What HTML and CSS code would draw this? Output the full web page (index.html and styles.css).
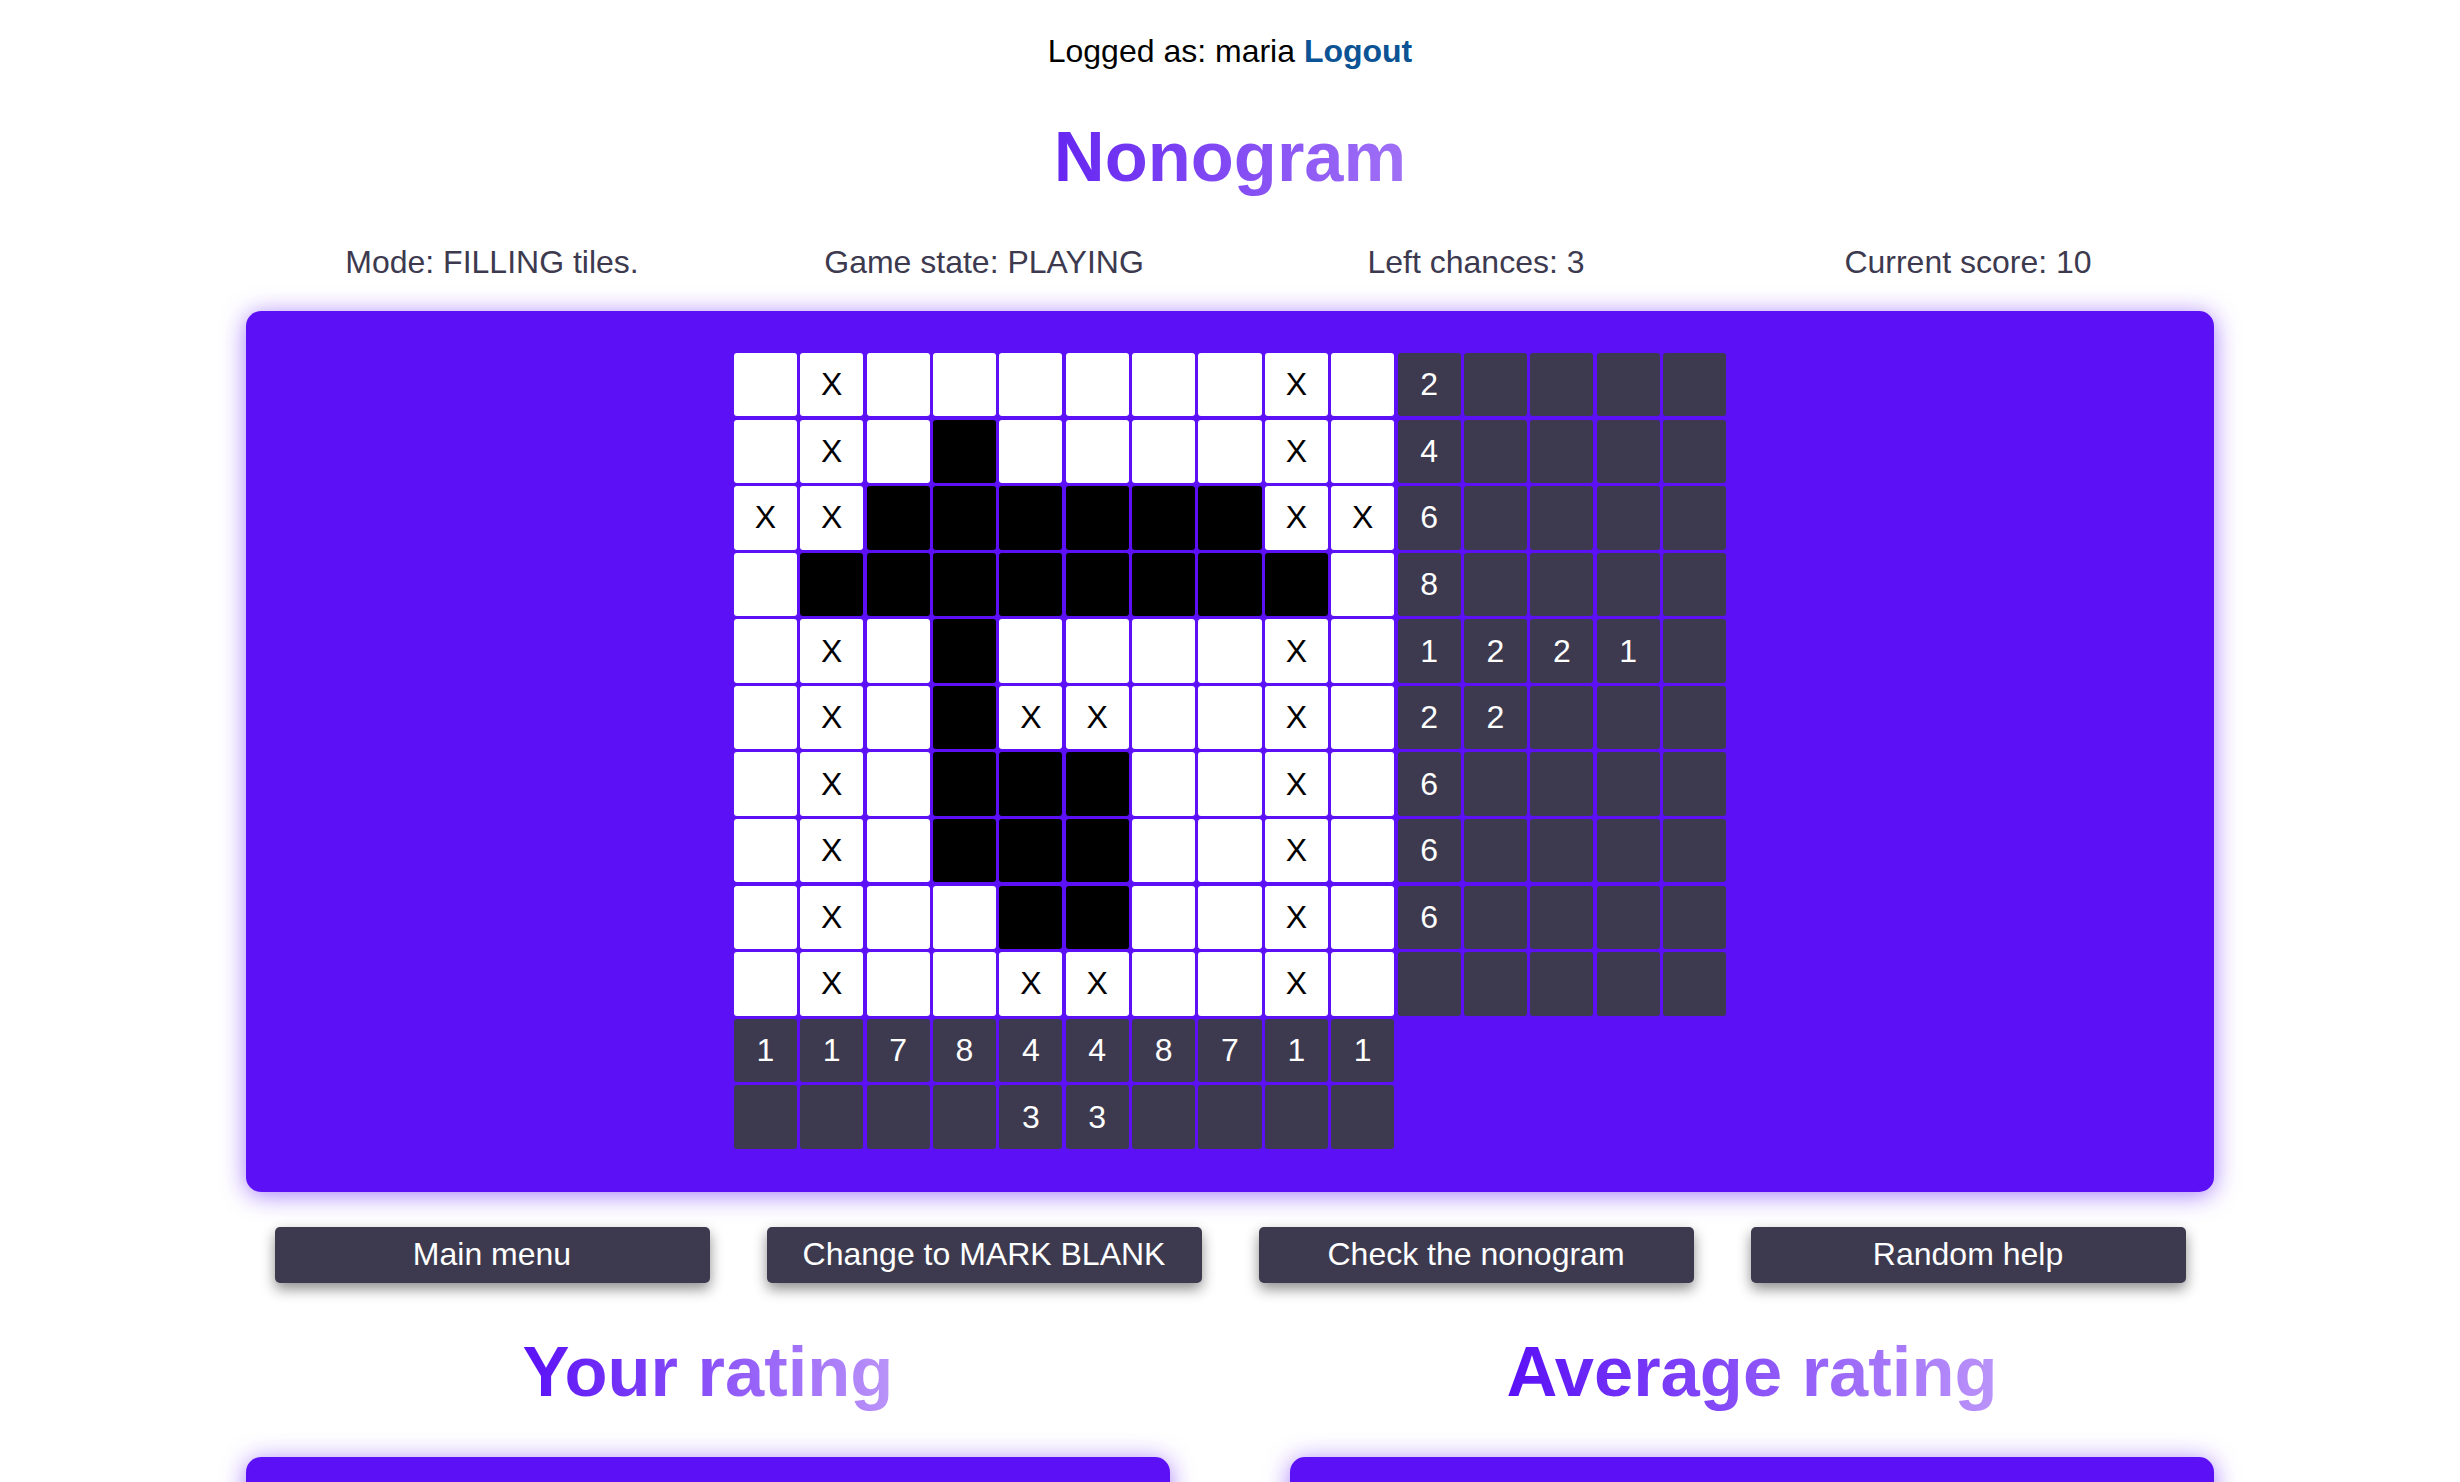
FILE: index.html
```html
<!DOCTYPE html>
<html lang="en">
<head>
<meta charset="utf-8">
<title>Nonogram</title>
<link rel="stylesheet" href="styles.css">
</head>
<body>
<p class="login">Logged as: maria <a href="#">Logout</a></p>
<h1 class="title"><span class="grad title-grad">Nonogram</span></h1>
<main class="wrap">
  <div class="stats">
    <div>Mode: FILLING tiles.</div>
    <div>Game state: PLAYING</div>
    <div>Left chances: 3</div>
    <div>Current score: 10</div>
  </div>
  <section class="board">
    <div class="grid">
      <!-- row 0 -->
      <div class="t"></div><div class="t">X</div><div class="t"></div><div class="t"></div><div class="t"></div><div class="t"></div><div class="t"></div><div class="t"></div><div class="t">X</div><div class="t"></div>
      <div class="h">2</div><div class="h"></div><div class="h"></div><div class="h"></div><div class="h"></div>
      <!-- row 1 -->
      <div class="t"></div><div class="t">X</div><div class="t"></div><div class="t f"></div><div class="t"></div><div class="t"></div><div class="t"></div><div class="t"></div><div class="t">X</div><div class="t"></div>
      <div class="h">4</div><div class="h"></div><div class="h"></div><div class="h"></div><div class="h"></div>
      <!-- row 2 -->
      <div class="t">X</div><div class="t">X</div><div class="t f"></div><div class="t f"></div><div class="t f"></div><div class="t f"></div><div class="t f"></div><div class="t f"></div><div class="t">X</div><div class="t">X</div>
      <div class="h">6</div><div class="h"></div><div class="h"></div><div class="h"></div><div class="h"></div>
      <!-- row 3 -->
      <div class="t"></div><div class="t f"></div><div class="t f"></div><div class="t f"></div><div class="t f"></div><div class="t f"></div><div class="t f"></div><div class="t f"></div><div class="t f"></div><div class="t"></div>
      <div class="h">8</div><div class="h"></div><div class="h"></div><div class="h"></div><div class="h"></div>
      <!-- row 4 -->
      <div class="t"></div><div class="t">X</div><div class="t"></div><div class="t f"></div><div class="t"></div><div class="t"></div><div class="t"></div><div class="t"></div><div class="t">X</div><div class="t"></div>
      <div class="h">1</div><div class="h">2</div><div class="h">2</div><div class="h">1</div><div class="h"></div>
      <!-- row 5 -->
      <div class="t"></div><div class="t">X</div><div class="t"></div><div class="t f"></div><div class="t">X</div><div class="t">X</div><div class="t"></div><div class="t"></div><div class="t">X</div><div class="t"></div>
      <div class="h">2</div><div class="h">2</div><div class="h"></div><div class="h"></div><div class="h"></div>
      <!-- row 6 -->
      <div class="t"></div><div class="t">X</div><div class="t"></div><div class="t f"></div><div class="t f"></div><div class="t f"></div><div class="t"></div><div class="t"></div><div class="t">X</div><div class="t"></div>
      <div class="h">6</div><div class="h"></div><div class="h"></div><div class="h"></div><div class="h"></div>
      <!-- row 7 -->
      <div class="t"></div><div class="t">X</div><div class="t"></div><div class="t f"></div><div class="t f"></div><div class="t f"></div><div class="t"></div><div class="t"></div><div class="t">X</div><div class="t"></div>
      <div class="h">6</div><div class="h"></div><div class="h"></div><div class="h"></div><div class="h"></div>
      <!-- row 8 -->
      <div class="t"></div><div class="t">X</div><div class="t"></div><div class="t"></div><div class="t f"></div><div class="t f"></div><div class="t"></div><div class="t"></div><div class="t">X</div><div class="t"></div>
      <div class="h">6</div><div class="h"></div><div class="h"></div><div class="h"></div><div class="h"></div>
      <!-- row 9 -->
      <div class="t"></div><div class="t">X</div><div class="t"></div><div class="t"></div><div class="t">X</div><div class="t">X</div><div class="t"></div><div class="t"></div><div class="t">X</div><div class="t"></div>
      <div class="h"></div><div class="h"></div><div class="h"></div><div class="h"></div><div class="h"></div>
      <!-- column hints row 1 -->
      <div class="h">1</div><div class="h">1</div><div class="h">7</div><div class="h">8</div><div class="h">4</div><div class="h">4</div><div class="h">8</div><div class="h">7</div><div class="h">1</div><div class="h">1</div>
      <div class="v"></div><div class="v"></div><div class="v"></div><div class="v"></div><div class="v"></div>
      <!-- column hints row 2 -->
      <div class="h"></div><div class="h"></div><div class="h"></div><div class="h"></div><div class="h">3</div><div class="h">3</div><div class="h"></div><div class="h"></div><div class="h"></div><div class="h"></div>
      <div class="v"></div><div class="v"></div><div class="v"></div><div class="v"></div><div class="v"></div>
    </div>
  </section>
  <div class="actions">
    <button class="btn">Main menu</button>
    <button class="btn">Change to MARK BLANK</button>
    <button class="btn">Check the nonogram</button>
    <button class="btn">Random help</button>
  </div>
  <div class="ratings">
    <div class="rating">
      <h2 class="rating-title"><span class="grad rate-grad">Your rating</span></h2>
      <div class="rate-panel"></div>
    </div>
    <div class="rating">
      <h2 class="rating-title"><span class="grad rate-grad">Average rating</span></h2>
      <div class="rate-panel"></div>
    </div>
  </div>
</main>
</body>
</html>
```
FILE: styles.css
```css
html, body {
  margin: 0;
  padding: 0;
  background: #ffffff;
}

body {
  font-family: "Liberation Sans", Arial, sans-serif;
  color: #000000;
}

.login {
  margin: 0;
  padding-top: 33px;
  text-align: center;
  font-size: 32px;
  line-height: 37px;
}

.login a {
  color: #0b5394;
  font-weight: bold;
  text-decoration: none;
}

.title {
  margin: 45px 0 0;
  text-align: center;
  font-size: 70.5px;
  line-height: 83px;
  font-weight: bold;
}

.grad {
  display: inline-block;
  -webkit-background-clip: text;
  background-clip: text;
  color: transparent;
  -webkit-text-fill-color: transparent;
}

.title-grad {
  background-image: linear-gradient(90deg, #6626f1 0%, #a070f6 100%);
}

.rate-grad {
  background-image: linear-gradient(90deg, #5a10f6 0%, #bb94f9 100%);
}

.wrap {
  width: 1968px;
  margin: 0 auto;
}

.stats {
  display: grid;
  grid-template-columns: repeat(4, 1fr);
  margin-top: 46px;
  font-size: 32px;
  line-height: 37px;
  color: #3d3a4f;
  text-align: center;
}

.board {
  margin-top: 30px;
  background: #5b10f6;
  border-radius: 15px;
  box-shadow: 0 3px 24px rgba(91, 16, 246, 0.55);
  padding: 42px 0 43px;
  display: flex;
  justify-content: center;
}

.grid {
  display: grid;
  grid-template-columns: repeat(15, 63.2px);
  grid-auto-rows: 63.4px;
  gap: 3.2px;
}

.t, .h, .v {
  display: flex;
  align-items: center;
  justify-content: center;
  font-size: 32px;
  border-radius: 3px;
}

.t {
  background: #ffffff;
  color: #000000;
}

.t.f {
  background: #000000;
}

.h {
  background: #3d3a4f;
  color: #ffffff;
}

.v {
  background: transparent;
}

.actions {
  display: grid;
  grid-template-columns: repeat(4, 1fr);
  justify-items: center;
  margin-top: 35px;
}

.btn {
  width: 435px;
  height: 56px;
  border: none;
  border-radius: 5px;
  background: #3d3a4f;
  color: #ffffff;
  font-family: "Liberation Sans", Arial, sans-serif;
  font-size: 32px;
  padding: 0;
  box-shadow: 0 6px 14px rgba(0, 0, 0, 0.45);
  cursor: pointer;
}

.ratings {
  display: grid;
  grid-template-columns: 1fr 1fr;
  column-gap: 120px;
  margin-top: 47px;
}

.rating-title {
  margin: 0;
  text-align: center;
  font-size: 70.5px;
  line-height: 83px;
  font-weight: bold;
}

.rate-panel {
  margin-top: 44px;
  height: 300px;
  background: #5b10f6;
  border-radius: 15px;
  box-shadow: 0 3px 24px rgba(91, 16, 246, 0.55);
}
```
